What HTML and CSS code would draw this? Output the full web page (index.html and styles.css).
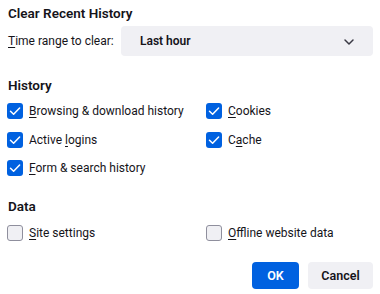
FILE: index.html
```html
<!DOCTYPE html>
<html lang="en">
<head>
    <meta charset="UTF-8">
    <title>Clear Recent History</title>
    <link rel="stylesheet" href="styles.css">
</head>
<body>

    <!-- Dialog -->
    <div class="dialog">
        <h1 class="title">Clear Recent History</h1>

        <!-- Time range -->
        <div class="range-row">
            <label class="range-label"><u>T</u>ime range to clear:</label>
            <div class="select">
                <span>Last hour</span>
                <svg class="chevron" width="12" height="12" viewBox="0 0 12 12">
                    <path d="M2 4 L6 8 L10 4" fill="none" stroke="#3a3944" stroke-width="1.5" stroke-linecap="round" stroke-linejoin="round"/>
                </svg>
            </div>
        </div>

        <!-- History -->
        <h2 class="section-title history-title">History</h2>
        <div class="options history-options">
            <label class="option"><span class="box checked"><svg width="16" height="16" viewBox="0 0 16 16"><path d="M3.5 8.2 L6.6 11.2 L12.6 5" fill="none" stroke="#fff" stroke-width="1.5" stroke-linecap="round" stroke-linejoin="round"/></svg></span><span><u>B</u>rowsing &amp; download history</span></label>
            <label class="option"><span class="box checked"><svg width="16" height="16" viewBox="0 0 16 16"><path d="M3.5 8.2 L6.6 11.2 L12.6 5" fill="none" stroke="#fff" stroke-width="1.5" stroke-linecap="round" stroke-linejoin="round"/></svg></span><span><u>C</u>ookies</span></label>
            <label class="option"><span class="box checked"><svg width="16" height="16" viewBox="0 0 16 16"><path d="M3.5 8.2 L6.6 11.2 L12.6 5" fill="none" stroke="#fff" stroke-width="1.5" stroke-linecap="round" stroke-linejoin="round"/></svg></span><span>Active <u>l</u>ogins</span></label>
            <label class="option"><span class="box checked"><svg width="16" height="16" viewBox="0 0 16 16"><path d="M3.5 8.2 L6.6 11.2 L12.6 5" fill="none" stroke="#fff" stroke-width="1.5" stroke-linecap="round" stroke-linejoin="round"/></svg></span><span>C<u>a</u>che</span></label>
            <label class="option"><span class="box checked"><svg width="16" height="16" viewBox="0 0 16 16"><path d="M3.5 8.2 L6.6 11.2 L12.6 5" fill="none" stroke="#fff" stroke-width="1.5" stroke-linecap="round" stroke-linejoin="round"/></svg></span><span><u>F</u>orm &amp; search history</span></label>
        </div>

        <!-- Data -->
        <h2 class="section-title data-title">Data</h2>
        <div class="options data-options">
            <label class="option"><span class="box"></span><span><u>S</u>ite settings</span></label>
            <label class="option"><span class="box"></span><span><u>O</u>ffline website data</span></label>
        </div>

        <!-- Buttons -->
        <div class="buttons">
            <button class="btn primary">OK</button>
            <button class="btn">Cancel</button>
        </div>
    </div>

</body>
</html>
```

FILE: styles.css
```css
/* Reset */
body, h1, h2 {
    margin: 0;
    padding: 0;
}

body {
    font-family: Roboto, "Noto Sans", sans-serif;
    font-size: 12px;
    color: #15141a;
    background-color: #fff;
}

.dialog {
    width: 380px;
    height: 294px;
    padding: 3px 7px 0 7px;
    box-sizing: border-box;
    white-space: nowrap;
}

/* Title */
.title {
    font-size: 13.5px;
    font-weight: 600;
    line-height: 20px;
    margin-left: 1px;
}

u {
    text-decoration-thickness: 1px;
    text-underline-offset: 2px;
}

/* Time range row */
.range-row {
    display: flex;
    align-items: center;
    margin-top: 3px;
}

.range-label {
    width: 113px;
    padding-left: 1px;
}

.select {
    flex: 1;
    height: 30px;
    display: flex;
    align-items: center;
    justify-content: space-between;
    padding: 0 18px 0 19px;
    background-color: #f0f0f4;
    border-radius: 4px;
    font-weight: 600;
}

.chevron {
    margin-top: 1px;
}

/* Section titles */
.section-title {
    font-size: 13.5px;
    font-weight: 600;
    line-height: 20px;
    margin-left: 1px;
}

.history-title {
    margin-top: 19px;
}

.data-title {
    margin-top: 19px;
}

/* Checkbox grid */
.options {
    display: grid;
    grid-template-columns: 199px 1fr;
    row-gap: 10.5px;
}

.history-options {
    margin-top: 7px;
}

.data-options {
    margin-top: 8px;
}

.option {
    display: flex;
    align-items: center;
    gap: 6px;
    height: 18px;
    line-height: 18px;
}

.box {
    width: 16px;
    height: 16px;
    box-sizing: border-box;
    border: 1px solid #8f8f9d;
    border-radius: 3px;
    background-color: #f0f0f4;
    display: flex;
}

.box.checked {
    border: none;
    background-color: #0061e0;
}

/* Buttons */
.buttons {
    display: flex;
    justify-content: flex-end;
    gap: 9px;
    margin-top: 20px;
}

.btn {
    font-family: inherit;
    font-size: 12.5px;
    font-weight: 600;
    height: 27px;
    border: none;
    border-radius: 4px;
    background-color: #f0f0f4;
    color: #15141a;
}

.btn.primary {
    width: 47px;
    padding: 0;
    background-color: #0061e0;
    color: #fff;
}

.btn:not(.primary) {
    width: 65px;
    padding: 0;
}
```
